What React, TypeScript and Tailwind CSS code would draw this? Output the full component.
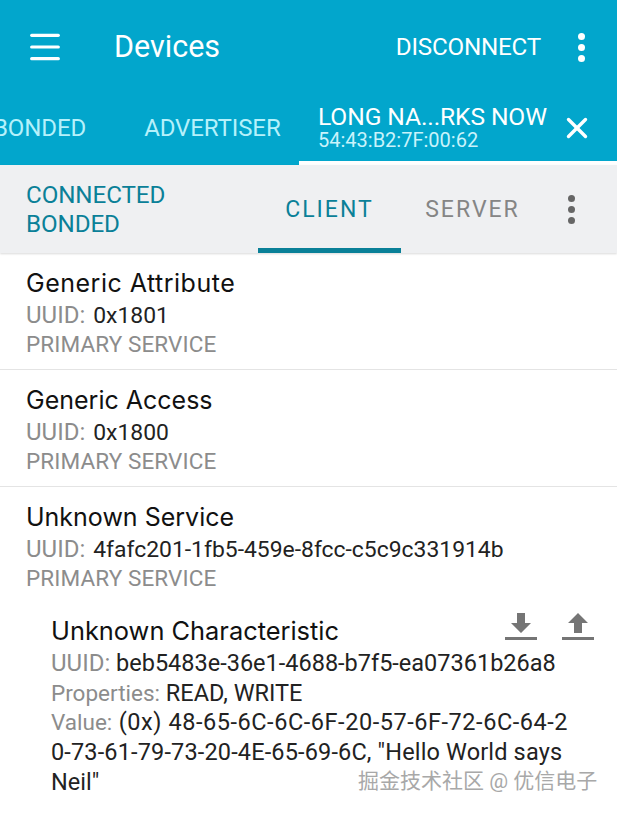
import { Menu, X } from "lucide-react";

const sans = "font-['Roboto','Noto_Sans',sans-serif]";

function Dots({ className }: { className: string }) {
  return (
    <div className={"flex flex-col items-center justify-center gap-[4px] " + className}>
      <span className="w-[7px] h-[7px] rounded-full bg-current" />
      <span className="w-[7px] h-[7px] rounded-full bg-current" />
      <span className="w-[7px] h-[7px] rounded-full bg-current" />
    </div>
  );
}

function Service({ title, uuid, titleClass, last }: { title: string; uuid: string; titleClass?: string; last?: boolean }) {
  return (
    <section className={"pl-[26px] pt-[14px] h-[117px] " + (last ? "" : "border-b border-[#e4e4e4]")}>
      <h2 className={"font-['Inter',sans-serif] text-[25px] leading-[32px] text-[#111] " + (titleClass ?? "")}>{title}</h2>
      <p className="mt-[1px] text-[22.5px] leading-[30px] text-[#222]">
        <span className="text-[#8c8c8c] text-[24px]">UUID:</span>
        <span className="ml-[8px] text-[22.9px]">{uuid}</span>
      </p>
      <p className="-mt-[1px] text-[22.5px] leading-[28px] text-[#8c8c8c] tracking-[0.1px]">PRIMARY SERVICE</p>
    </section>
  );
}

export default function App() {
  return (
    <main className={"w-[617px] h-[814px] overflow-hidden bg-white relative " + sans}>
      <header className="h-[165px] bg-[#02a6cc] text-white flex flex-col">
        <div className="h-[94px] flex items-center">
          <Menu className="ml-[25px] w-[40px] h-[40px]" strokeWidth={1.9} absoluteStrokeWidth />
          <h1 className="ml-[49px] text-[30.5px] leading-none">Devices</h1>
          <span className="ml-auto text-[24.2px] tracking-[-0.2px]">DISCONNECT</span>
          <Dots className="ml-[37px] mr-[32px]" />
        </div>
        <div className="flex-1 flex overflow-hidden">
          <div className="w-[299px] shrink-0 flex items-center gap-[58px] pb-[3px] text-[24px] tracking-[-0.1px] text-[#b5f1fb] overflow-hidden">
            <span className="-ml-[7px]">BONDED</span>
            <span>ADVERTISER</span>
          </div>
          <div className="flex-1 border-b-[4px] border-white flex items-center pl-[19px]">
            <div className="w-[247px]">
              <div className="text-[24.6px] leading-[26px] tracking-[-0.1px] whitespace-nowrap -mt-[1px]">LONG NA...RKS NOW</div>
              <div className="text-[20px] leading-[20px] text-[#c9f3fb]">54:43:B2:7F:00:62</div>
            </div>
            <X className="w-[34px] h-[34px] -ml-[5px]" strokeWidth={2.4} absoluteStrokeWidth />
          </div>
        </div>
      </header>

      <div className="h-[88px] bg-[#eff0f2] flex shadow-[0_1px_2px_rgba(0,0,0,0.15)] relative">
        <div className="pl-[26px] pt-[16px] w-[258px] text-[24.2px] leading-[29px] text-[#0a8098] tracking-[-0.1px]">
          <div>CONNECTED</div>
          <div>BONDED</div>
        </div>
        <div className="w-[143px] border-b-[5px] border-[#0a8098] pt-[8px] flex items-center justify-center text-[23px] tracking-[2px] text-[#0a8098]">
          CLIENT
        </div>
        <div className="w-[143px] pt-[8px] pb-[5px] flex items-center justify-center text-[23px] tracking-[2px] text-[#858585]">
          SERVER
        </div>
        <Dots className="ml-[24px] text-[#666]" />
      </div>

      <Service title="Generic Attribute" uuid="0x1801" titleClass="tracking-[0.5px]" />
      <Service title="Generic Access" uuid="0x1800" />
      <Service title="Unknown Service" uuid="4fafc201-1fb5-459e-8fcc-c5c9c331914b" last />

      <section className="mt-[11px] pl-[51px] pr-[22px] relative">
        <div className="flex items-center h-[32px]">
          <h3 className="font-['Inter',sans-serif] text-[25.4px] leading-[32px] text-[#111]">Unknown Characteristic</h3>
          <div className="ml-auto flex gap-[23px] -mt-[8px]">
            <svg width="34" height="30" viewBox="0 0 34 30" fill="#757575">
              <path d="M13 1h8v10h6L17 21 7 11h6z" />
              <rect x="1" y="25" width="32" height="3" />
            </svg>
            <svg width="34" height="30" viewBox="0 0 34 30" fill="#757575">
              <path d="M13 21h8V11h6L17 1 7 11h6z" />
              <rect x="1" y="25" width="32" height="3" />
            </svg>
          </div>
        </div>
        <div className="text-[23.5px] leading-[29.7px] text-[#222] mt-[2px] w-[540px] whitespace-nowrap">
          <p><span className="text-[#8c8c8c] text-[24px]">UUID:</span> beb5483e-36e1-4688-b7f5-ea07361b26a8</p>
          <p><span className="text-[#8c8c8c] text-[22.5px]">Properties:</span> READ, WRITE</p>
          <p className="tracking-[0.55px]">
            <span className="text-[#8c8c8c] text-[22.5px] tracking-normal">Value:</span> (0x) 48-65-6C-6C-6F-20-57-6F-72-6C-64-2
          </p>
          <p className="tracking-[0.15px]">0-73-61-79-73-20-4E-65-69-6C, "Hello World says</p>
          <p>Neil"</p>
        </div>
      </section>

      <div className="absolute left-[358px] top-[767px] text-[21px] leading-[28px] whitespace-nowrap text-[#a8a8a8] font-['Roboto','Noto_Sans_CJK_SC',sans-serif]">
        掘金技术社区 @ 优信电子
      </div>
    </main>
  );
}
